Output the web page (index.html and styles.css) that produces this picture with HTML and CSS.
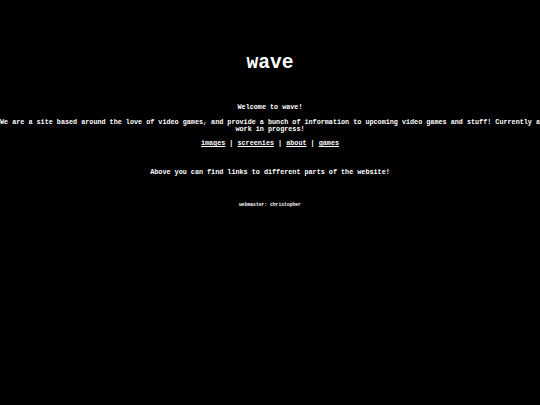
FILE: index.html
```html
<!DOCTYPE html>
<html>
<head>
<meta charset="utf-8">
<title>wave</title>
<link rel="stylesheet" href="styles.css">
</head>
<body>
<div class="page">
  <h1 class="title">wave</h1>
  <p class="text welcome">Welcome to wave!</p>
  <p class="text intro">We are a site based around the love of video games, and provide a bunch of information to upcoming video games and stuff! Currently a work in progress!</p>
  <p class="text links"><a href="#">images</a> | <a href="#">screenies</a> | <a href="#">about</a> | <a href="#">games</a></p>
  <p class="text spaced">Above you can find links to different parts of the website!</p>
  <p class="credit">webmaster: christopher</p>
</div>
</body>
</html>
```
FILE: styles.css
```css
html, body {
  margin: 0;
  padding: 0;
  background: #000;
}
body {
  width: 540px;
  height: 405px;
  overflow: hidden;
  color: #fff;
  font-family: "Liberation Mono", "Courier New", monospace;
  font-weight: bold;
}
.page {
  text-align: center;
  padding-top: 50px;
}
.title {
  font-size: 19.6px;
  line-height: 26px;
  margin: 0 0 28px 0;
}
.text {
  font-size: 6.77px;
  line-height: 7.6px;
  margin: 0 0 7.4px 0;
}
.welcome {
  margin-bottom: 7.7px;
}
.intro {
  line-height: 7px;
  margin-bottom: 6.9px;
}
.text a {
  color: #fff;
}
.spaced {
  margin-top: 21px;
}
.credit {
  font-size: 4.7px;
  line-height: 6px;
  margin-top: 26px;
}
```
